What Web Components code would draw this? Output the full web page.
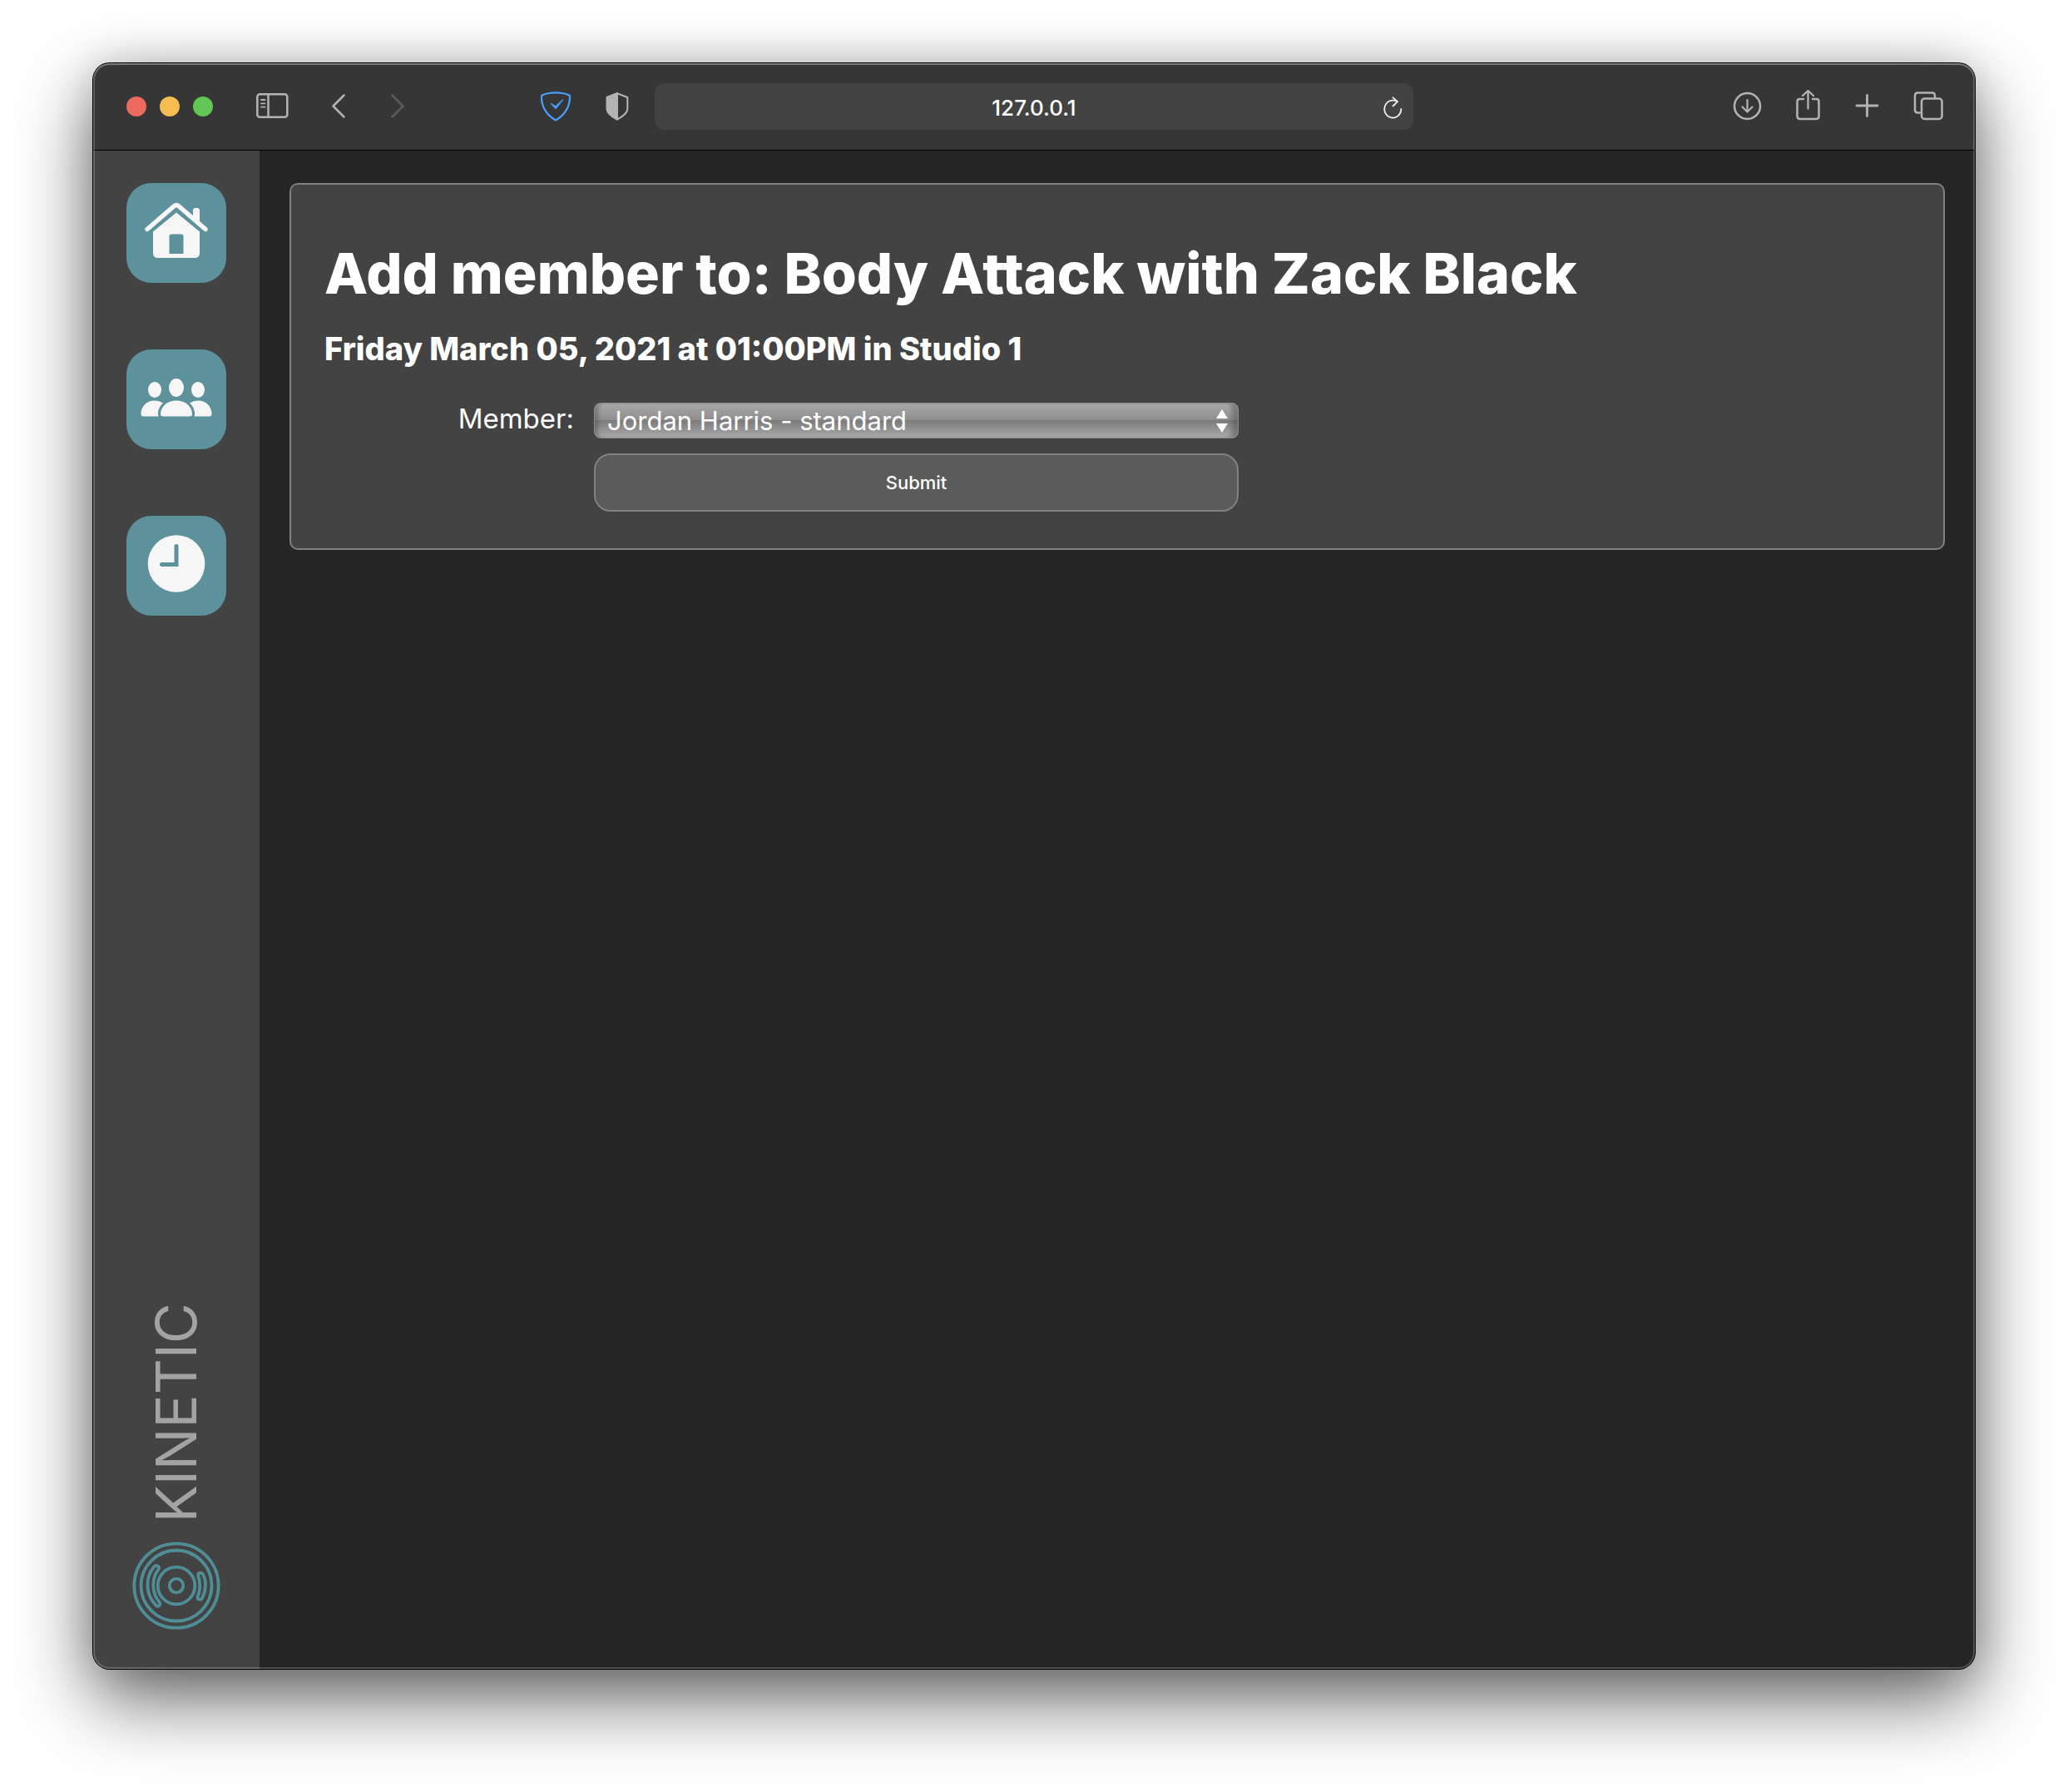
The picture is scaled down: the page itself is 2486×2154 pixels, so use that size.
<!DOCTYPE html>
<html lang="en">
<head>
<meta charset="utf-8">
<title>Kinetic</title>
<style>
  html, body { margin: 0; }
  body {
    box-sizing: border-box;
    min-height: 100vh;
    padding: 76px 112px 148px;
    display: flex;
    background: #fff;
    color: #fff;
    font-family: Inter, "Liberation Sans", sans-serif;
  }
</style>
</head>
<body>
<browser-window>
  <browser-toolbar slot="toolbar" address="127.0.0.1"></browser-toolbar>
  <side-bar slot="sidebar">
    <nav-tile href="#home" label="Home">
      <svg viewBox="0 0 120 120" width="120" height="120" aria-hidden="true">
        <path d="M80 44V33q0-3 3-3h2q3 0 3 3v18z" fill="#f6f6f6"/>
        <path d="M25 55.500L57.500 27.500Q60 25.500 62.500 27.500L95 55.500" fill="none" stroke="#f6f6f6" stroke-width="5.500" stroke-linecap="round"/>
        <path d="M60 35.500L88 58.500V84q0 6-6 6H38q-6 0-6-6V58.500zM54 61.500q-2.500 0-2.500 2.500v21H68.500V64q0-2.500-2.500-2.500z" fill="#f6f6f6" fill-rule="evenodd"/>
      </svg>
    </nav-tile>
    <nav-tile href="#members" label="Members">
      <svg viewBox="0 0 120 120" width="120" height="120" aria-hidden="true">
        <g fill="#f6f6f6">
          <ellipse cx="60" cy="46" rx="9" ry="11"/>
          <ellipse cx="34" cy="48.500" rx="8" ry="9.500"/>
          <ellipse cx="86" cy="48.500" rx="8" ry="9.500"/>
          <path d="M44 80.500Q41 80.500 41 77.500C41 69 49 61.500 60 61.500S79 69 79 77.500Q79 80.500 76 80.500z"/>
          <path d="M20.500 80.500Q17.500 80.500 17.500 77.500C17.500 69 24 61.500 34 61.500Q39.500 61.500 44 64.500C39.500 68.500 37 74.500 38.500 80.500z"/>
          <path d="M99.500 80.500Q102.500 80.500 102.500 77.500C102.500 69 96 61.500 86 61.500Q80.500 61.500 76 64.500C80.500 68.500 83 74.500 81.800 80.500z"/>
        </g>
      </svg>
    </nav-tile>
    <nav-tile href="#classes" label="Classes">
      <svg viewBox="0 0 120 120" width="120" height="120" aria-hidden="true">
        <circle cx="60" cy="57.500" r="34.300" fill="#f6f6f6"/>
        <path d="M60 36.500V58.500H42.500" fill="none" stroke="#5d929c" stroke-width="5" stroke-linecap="round"/>
      </svg>
    </nav-tile>
  </side-bar>
  <content-card>
    <h1 slot="title">Add member to: Body Attack with Zack Black</h1>
    <h2 slot="subtitle">Friday March 05, 2021 at 01:00PM in Studio 1</h2>
    <member-form></member-form>
  </content-card>
</browser-window>

<script>
  const define = (name, html, setup) => {
    customElements.define(name, class extends HTMLElement {
      constructor() {
        super();
        this.attachShadow({ mode: "open" }).innerHTML = html;
      }
      connectedCallback() {
        if (setup) setup(this, this.shadowRoot);
      }
    });
  };

  define("browser-window", `
    <style>
      :host {
        flex: 1;
        min-width: 0;
        position: relative;
        display: flex;
        flex-direction: column;
        border-radius: 20px;
        background: #252525;
        box-shadow: 0 0 0 1px #000, 0 36px 92px rgba(0,0,0,.62), 0 0 48px rgba(0,0,0,.14);
      }
      :host::after {
        content: "";
        position: absolute;
        inset: 0;
        border-radius: 20px;
        pointer-events: none;
        box-shadow: inset 0 0 0 2px rgba(255,255,255,.2), inset 0 2px 0 rgba(255,255,255,.18);
      }
      .body { flex: 1; display: flex; min-height: 0; }
      main { flex: 1; min-width: 0; padding: 39px 36px; }
    </style>
    <slot name="toolbar"></slot>
    <div class="body">
      <slot name="sidebar"></slot>
      <main><slot></slot></main>
    </div>`);

  define("browser-toolbar", `
    <style>
      :host {
        display: grid;
        grid-template-columns: 1fr 912px 1fr;
        align-items: center;
        height: 104px;
        border-bottom: 1px solid #000;
        border-radius: 20px 20px 0 0;
        background: #363636;
        color: #b4b4b4;
      }
      .left, .right, .lights, .history, .shields { display: flex; align-items: center; }
      .left { padding: 0 25px 0 40px; }
      .lights { gap: 16px; margin-right: 52px; }
      .lights button { width: 24px; height: 24px; border-radius: 50%; }
      .close { background: #ed6a5f; }
      .minimise { background: #f6be50; }
      .zoom { background: #62c655; }
      .history { gap: 31px; margin-left: 39px; }
      .shields { gap: 34px; margin-left: auto; }
      .right { justify-content: flex-end; gap: 32px; padding-right: 36px; }
      button { display: block; margin: 0; padding: 0; border: 0; background: none; color: inherit; }
      button:disabled { color: #5c5c5c; }
      svg { display: block; fill: none; stroke: currentColor; stroke-width: 2.5; stroke-linecap: round; stroke-linejoin: round; }
      .address {
        display: grid;
        grid-template-columns: 40px 1fr 40px;
        align-items: center;
        height: 56px;
        box-sizing: border-box;
        padding: 3px 4px 0;
        border-radius: 12px;
        background: #434343;
        color: #f0f0f0;
      }
      input {
        grid-column: 2;
        min-width: 0;
        padding: 0;
        border: 0;
        outline: 0;
        background: none;
        color: #fff;
        text-align: center;
        font: 500 26px/32px Inter, "Liberation Sans", sans-serif;
      }
    </style>
    <div class="left">
      <div class="lights">
        <button class="close" aria-label="Close"></button>
        <button class="minimise" aria-label="Minimise"></button>
        <button class="zoom" aria-label="Zoom"></button>
      </div>
      <button aria-label="Sidebar"><svg width="40" height="40" viewBox="0 0 40 40"><rect x="1.300" y="5.200" width="36" height="27.500" rx="3"/><path d="M14.500 5.500V32"/><path d="M6 12h4.500M6 16.300h4.500M6 20.600h4.500" stroke-width="1.800"/></svg></button>
      <div class="history">
        <button aria-label="Back"><svg width="40" height="40" viewBox="0 0 40 40"><path d="M26.500 6.500L13.500 19.500L26.500 32.500"/></svg></button>
        <button aria-label="Forward" disabled><svg width="40" height="40" viewBox="0 0 40 40"><path d="M13.500 6.500L26.500 19.500L13.500 32.500"/></svg></button>
      </div>
      <div class="shields">
        <button aria-label="Content blocker" style="color:#4a9df8"><svg width="40" height="40" viewBox="0 0 40 40"><path d="M20 3.300C26 3.300 32 4.300 37 6.700C37.500 20 31 30 20 36.500C9 30 2.500 20 3 6.700C8 4.300 14 3.300 20 3.300z" stroke-width="2.200"/><path d="M14.500 16.500L20 22.500L28.500 12L20 20z" stroke-width="1.200" fill="currentColor"/></svg></button>
        <button aria-label="Privacy report"><svg width="40" height="40" viewBox="0 0 40 40"><path d="M20 4.200L32.300 9V23.500Q31.500 29.500 20 35.500Q8.500 29.500 7.700 23.500V9z" stroke-width="2"/><path d="M20 4.200V35.500Q8.500 29.500 7.700 23.500V9z" fill="currentColor" stroke-width="2"/></svg></button>
      </div>
    </div>
    <div class="address">
      <input type="text" aria-label="Address">
      <button aria-label="Reload"><svg width="40" height="40" viewBox="0 0 40 40"><path d="M29.300 21A10 10.500 0 1 1 24.300 12" stroke-width="1.800"/><path d="M19.500 7.300L25 12.200L19.500 17.500" stroke-width="1.800"/></svg></button>
    </div>
    <div class="right">
      <button aria-label="Downloads"><svg width="40" height="40" viewBox="0 0 40 40"><circle cx="18.500" cy="19.500" r="15.500"/><path d="M18.500 12V26M12.500 20.500L18.500 26.500L24.500 20.500" stroke-width="2.200"/></svg></button>
      <button aria-label="Share"><svg width="40" height="40" viewBox="0 0 40 40"><path d="M14 11H9.500Q6.500 11 6.500 14V31.500Q6.500 35 10 35H29Q32.500 35 32.500 31.500V14Q32.500 11 29.500 11H25"/><path d="M19.500 22.500V1.500M13 7L19.500 1L26 7" stroke-width="2.300"/></svg></button>
      <button aria-label="New tab"><svg width="40" height="40" viewBox="0 0 40 40"><path d="M18.500 6.500V31.500M6 19H31" stroke-width="2.800"/></svg></button>
      <button aria-label="Tab overview"><svg width="40" height="40" viewBox="0 0 40 40"><path d="M10 27.500H7.500Q4 27.500 4 24V7Q4 3.500 7.500 3.500H24.500Q28 3.500 28 7V9.500"/><rect x="12" y="10.500" width="24.500" height="24.500" rx="3.500"/></svg></button>
    </div>`,
    (host, root) => {
      root.querySelector("input").value = host.getAttribute("address") || "";
    });

  define("side-bar", `
    <style>
      :host {
        box-sizing: border-box;
        width: 200px;
        padding: 39px 0 46px;
        display: flex;
        flex-direction: column;
        justify-content: space-between;
        align-items: center;
        border-bottom-left-radius: 20px;
        background: #434343;
      }
      nav { display: flex; flex-direction: column; gap: 80px; }
    </style>
    <nav aria-label="Main"><slot></slot></nav>
    <brand-mark></brand-mark>`);

  define("nav-tile", `
    <style>
      :host { display: block; }
      a { display: block; width: 120px; height: 120px; border-radius: 30px; background: #5d929c; }
    </style>
    <a><slot></slot></a>`,
    (host, root) => {
      const link = root.querySelector("a");
      link.href = host.getAttribute("href");
      link.setAttribute("aria-label", host.getAttribute("label"));
    });

  define("brand-mark", `
    <style>
      :host { display: flex; flex-direction: column; align-items: center; gap: 22px; }
      span {
        writing-mode: vertical-rl;
        transform: rotate(180deg);
        color: #a3a3a3;
        font: 400 67px/80px Inter, "Liberation Sans", sans-serif;
      }
      svg { display: block; fill: none; stroke: #4f8d97; stroke-width: 3.8; stroke-linejoin: round; }
    </style>
    <span>KINETIC</span>
    <svg width="108" height="108" viewBox="-54 -54 108 108" aria-hidden="true">
      <circle r="50.700"/>
      <circle r="42.500"/>
      <circle r="22.300"/>
      <circle r="8.300"/>
      <path d="M-21.500 -19.500C-30 -9 -30 9 -20.200 20C-18 22.500 -22 26.500 -24.700 23.500C-37.500 10 -37.500 -10 -27 -22.500C-24 -26 -19.500 -23 -21.500 -19.500z"/>
      <path d="M26.200 -12C29 -5 29 6 25.700 12.500C24.500 17 30 18 31.200 14.500C36 5 36 -6 32.400 -13C30.500 -17 25 -15.500 26.200 -12z"/>
    </svg>`);

  define("content-card", `
    <style>
      :host {
        display: block;
        padding: 66px 40px 44px;
        border: 2px solid #818181;
        border-radius: 10px;
        background: #434343;
      }
      ::slotted(h1) { margin: 0; font-size: 68px; line-height: 80px; font-weight: 800; }
      ::slotted(h2) { margin: 27px 0 41px; font-size: 38px; line-height: 48px; font-weight: 800; }
    </style>
    <slot name="title"></slot>
    <slot name="subtitle"></slot>
    <slot></slot>`);

  define("member-form", `
    <style>
      :host { display: block; }
      form {
        display: grid;
        grid-template-columns: 300px 1fr;
        align-items: center;
        gap: 18px 24px;
        max-width: 1099px;
      }
      label { align-self: start; text-align: right; font-size: 33px; line-height: 38px; }
      .picker { display: grid; align-items: center; }
      .picker > * { grid-area: 1 / 1; }
      select {
        appearance: none;
        width: 100%;
        height: 43px;
        margin: 0;
        padding: 0 15px;
        border: 1px solid #8a8a8a;
        border-radius: 8px;
        background: linear-gradient(#a9a9a9, #8e8e8e 48%, #7b7b7b 50%, #a9a9a9);
        box-shadow: inset 7px 0 4px -3px rgba(70,70,70,.4), inset -10px 0 5px -3px rgba(70,70,70,.4);
        color: #fff;
        font: 400 31px/40px Inter, "Liberation Sans", sans-serif;
      }
      svg { justify-self: end; margin-right: 12px; pointer-events: none; }
      button {
        grid-column: 2;
        height: 70px;
        padding: 0;
        border: 2px solid #818181;
        border-radius: 20px;
        background: #5b5b5b;
        color: #fff;
        font: 500 22px/28px Inter, "Liberation Sans", sans-serif;
      }
    </style>
    <form>
      <label for="member">Member:</label>
      <div class="picker">
        <select id="member"><option>Jordan Harris - standard</option></select>
        <svg width="16" height="30" viewBox="0 0 16 30" fill="#fff" aria-hidden="true"><path d="M8 1L15 12H1zM8 29L15 18H1z"/></svg>
      </div>
      <button type="submit">Submit</button>
    </form>`);
</script>
</body>
</html>
